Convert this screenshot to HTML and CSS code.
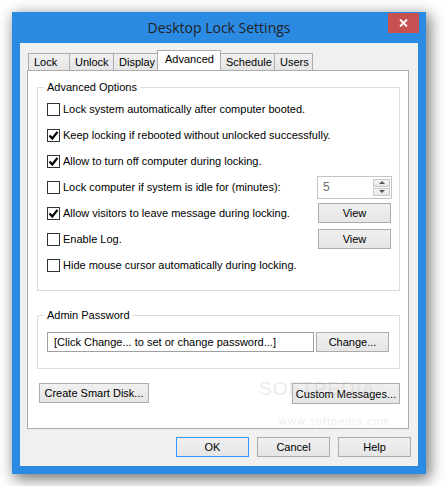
FILE: index.html
```html
<!DOCTYPE html>
<html>
<head>
  <title>Desktop Lock Settings</title>
<link rel="stylesheet" href="styles.css">
</head>
<body>
  <div class="window">
    <div class="titlebar">
      <span></span>
      <h1 class="title">Desktop Lock Settings</h1>
      <button class="close" title="Close">
        <svg width="9" height="8" viewBox="0 0 9 8"><path d="M1 0.5 L8 7.5 M8 0.5 L1 7.5" stroke="#fff" stroke-width="1.8" fill="none"/></svg>
      </button>
    </div>

    <div class="client">
      <ul class="tabs">
        <li class="tab tab-lock">Lock</li>
        <li class="tab tab-unlock">Unlock</li>
        <li class="tab tab-display">Display</li>
        <li class="tab tab-advanced active">Advanced</li>
        <li class="tab tab-schedule">Schedule</li>
        <li class="tab tab-users">Users</li>
      </ul>

      <div class="panel">
        <fieldset class="group">
          <legend>Advanced Options</legend>

          <div class="row">
            <label class="check"><span class="box"></span>Lock system automatically after computer booted.</label>
          </div>
          <div class="row">
            <label class="check"><span class="box checked"><svg width="11" height="11" viewBox="0 0 11 11"><path d="M1.5 5.5 L4.3 8.5 L9.5 1.8" stroke="#000" stroke-width="2.2" fill="none"/></svg></span>Keep locking if rebooted without unlocked successfully.</label>
          </div>
          <div class="row">
            <label class="check"><span class="box checked"><svg width="11" height="11" viewBox="0 0 11 11"><path d="M1.5 5.5 L4.3 8.5 L9.5 1.8" stroke="#000" stroke-width="2.2" fill="none"/></svg></span>Allow to turn off computer during locking.</label>
          </div>
          <div class="row">
            <label class="check"><span class="box"></span>Lock computer if system is idle for (minutes):</label>
            <div class="spin">
              <span class="spin-value">5</span>
              <span class="spin-buttons">
                <span class="spin-btn"><i class="arrow-up"></i></span>
                <span class="spin-btn"><i class="arrow-down"></i></span>
              </span>
            </div>
          </div>
          <div class="row">
            <label class="check"><span class="box checked"><svg width="11" height="11" viewBox="0 0 11 11"><path d="M1.5 5.5 L4.3 8.5 L9.5 1.8" stroke="#000" stroke-width="2.2" fill="none"/></svg></span>Allow visitors to leave message during locking.</label>
            <button class="btn">View</button>
          </div>
          <div class="row">
            <label class="check"><span class="box"></span>Enable Log.</label>
            <button class="btn">View</button>
          </div>
          <div class="row">
            <label class="check"><span class="box"></span>Hide mouse cursor automatically during locking.</label>
          </div>
        </fieldset>

        <fieldset class="group admin">
          <legend>Admin Password</legend>
          <div class="password-row">
            <div class="field">[Click Change... to set or change password...]</div>
            <button class="btn">Change...</button>
          </div>
        </fieldset>

        <div class="actions">
          <button class="btn btn-smart">Create Smart Disk...</button>
          <button class="btn btn-messages">Custom Messages...</button>
        </div>

        <div class="watermark">SOFTPEDIA<sup>™</sup></div>
        <div class="watermark-url">www.softpedia.com</div>
      </div>

      <div class="dialog-buttons">
        <button class="btn default">OK</button>
        <button class="btn">Cancel</button>
        <button class="btn">Help</button>
      </div>
    </div>
  </div>
</body>
</html>
```

FILE: styles.css
```css
body {
  margin: 0;
  padding: 12px;
  background-color: #fff;
  font-family: "Liberation Sans", Arial, sans-serif;
  font-size: 11px;
  color: #000;
}

.window {
  width: 414px;
  height: 462px;
  box-sizing: border-box;
  padding: 0 8px 8px;
  background-color: #2b8be3;
  box-shadow: 3px 4px 14px 1px rgba(0, 0, 0, 0.55);
  display: flex;
  flex-direction: column;
}

.titlebar {
  height: 31px;
  flex: none;
  display: grid;
  grid-template-columns: 1fr auto 1fr;
  align-items: center;
}

.title {
  margin: 0;
  font-family: "Open Sans", sans-serif;
  font-weight: normal;
  font-size: 14px;
  color: #222;
}

.close {
  justify-self: end;
  align-self: start;
  margin: 1px -1px 0 0;
  width: 31px;
  height: 20px;
  padding: 0;
  border: none;
  background-color: #c75050;
  display: flex;
  align-items: center;
  justify-content: center;
}

.client {
  flex: 1;
  background-color: #f0f0f0;
  padding: 7px 9px 9px 7px;
  display: flex;
  flex-direction: column;
}

/* tabs */
.tabs {
  display: flex;
  align-items: flex-end;
  height: 20px;
  margin: 0;
  padding: 0 0 0 1px;
  list-style: none;
}

.tab {
  box-sizing: border-box;
  height: 17px;
  margin-right: -1px;
  padding: 1px 0 0 5px;
  line-height: 15px;
  white-space: nowrap;
  overflow: hidden;
  border: 1px solid #acacac;
  border-bottom: none;
  background: linear-gradient(#f0f0f0, #e5e5e5);
}

.tab-lock { width: 42px; }
.tab-unlock { width: 45px; }
.tab-display { width: 45px; }
.tab-advanced { width: 64px; }
.tab-schedule { width: 55px; }
.tab-users { width: 39px; }

.tab.active {
  position: relative;
  height: 21px;
  margin-bottom: -1px;
  padding: 1px 0 0 7px;
  background: #fff;
}

.panel {
  flex: 1;
  position: relative;
  background-color: #fff;
  border: 1px solid #acacac;
  padding: 10px 8px 0 9px;
  overflow: hidden;
}

/* group boxes */
.group {
  margin: 0;
  padding: 2px 7px 12px 9px;
  border: 1px solid #dcdcdc;
  min-width: 0;
}

.group legend {
  padding: 0 3px;
  margin-left: -3px;
  line-height: 13px;
}

.row {
  display: grid;
  grid-template-columns: 1fr 75px;
  align-items: center;
  height: 26px;
}

.check {
  display: flex;
  align-items: center;
  gap: 3px;
  white-space: nowrap;
}

.box {
  width: 13px;
  height: 13px;
  box-sizing: border-box;
  border: 1px solid #333;
  background-color: #fff;
  display: flex;
  align-items: center;
  justify-content: center;
}

.spin {
  box-sizing: border-box;
  width: 75px;
  height: 23px;
  border: 1px solid #c4c4c4;
  background-color: #fff;
  display: flex;
}

.spin-value {
  flex: 1;
  padding-left: 5px;
  line-height: 21px;
  color: #6d6d6d;
  font-size: 12px;
}

.spin-buttons {
  width: 17px;
  display: flex;
  flex-direction: column;
  gap: 1px;
  padding: 2px 1px 2px 0;
}

.spin-btn {
  flex: 1;
  border: 1px solid #c8c8c8;
  background: linear-gradient(#f4f4f4, #e6e6e6);
  display: flex;
  align-items: center;
  justify-content: center;
}

.arrow-up {
  border-left: 3px solid transparent;
  border-right: 3px solid transparent;
  border-bottom: 3px solid #555;
}

.arrow-down {
  border-left: 3px solid transparent;
  border-right: 3px solid transparent;
  border-top: 3px solid #555;
}

.btn {
  box-sizing: border-box;
  width: 73px;
  height: 20px;
  padding: 0;
  border: 1px solid #acacac;
  background: linear-gradient(#f0f0f0, #e5e5e5);
  font: inherit;
  color: #000;
  white-space: nowrap;
  justify-self: center;
}

.btn.default {
  border-color: #3399ff;
}

.admin {
  margin-top: 18px;
  padding: 10px 7px 16px 9px;
}

.password-row {
  display: grid;
  grid-template-columns: 267px 73px;
  gap: 2px;
}

.field {
  box-sizing: border-box;
  height: 20px;
  padding-left: 6px;
  line-height: 18px;
  border: 1px solid #a0a0a0;
  background-color: #fff;
  white-space: nowrap;
  overflow: hidden;
}

.actions {
  display: flex;
  justify-content: space-between;
  margin: 14px 0 0 2px;
}

.btn-smart {
  width: 110px;
}

.btn-messages {
  width: 108px;
  height: 21px;
}

.watermark {
  position: absolute;
  left: 231px;
  top: 307px;
  font-size: 19px;
  letter-spacing: 1px;
  color: rgba(190, 190, 190, 0.3);
  pointer-events: none;
}

.watermark sup {
  font-size: 6px;
}

.watermark-url {
  position: absolute;
  left: 251px;
  top: 344px;
  font-size: 11px;
  letter-spacing: 1px;
  color: rgba(190, 190, 190, 0.3);
  pointer-events: none;
}

.dialog-buttons {
  display: flex;
  justify-content: flex-end;
  gap: 8px;
  margin: 8px -2px 0 0;
}
```
